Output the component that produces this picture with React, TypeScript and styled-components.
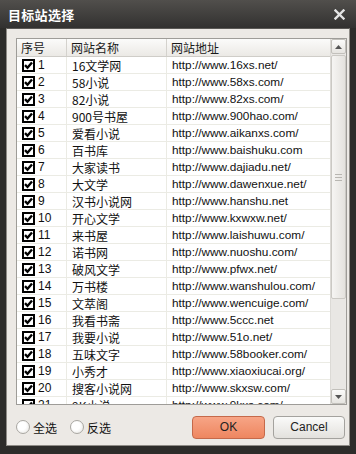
import React from 'react';
import styled, { createGlobalStyle } from 'styled-components';

const GlobalStyle = createGlobalStyle`
  html, body {
    margin: 0;
    padding: 0;
    background: #2d2c2a;
  }
  * {
    box-sizing: border-box;
  }
`;

const sites: [string, string][] = [
  ['16文学网', 'http://www.16xs.net/'],
  ['58小说', 'http://www.58xs.com/'],
  ['82小说', 'http://www.82xs.com/'],
  ['900号书屋', 'http://www.900hao.com/'],
  ['爱看小说', 'http://www.aikanxs.com/'],
  ['百书库', 'http://www.baishuku.com'],
  ['大家读书', 'http://www.dajiadu.net/'],
  ['大文学', 'http://www.dawenxue.net/'],
  ['汉书小说网', 'http://www.hanshu.net'],
  ['开心文学', 'http://www.kxwxw.net/'],
  ['来书屋', 'http://www.laishuwu.com/'],
  ['诺书网', 'http://www.nuoshu.com/'],
  ['破风文学', 'http://www.pfwx.net/'],
  ['万书楼', 'http://www.wanshulou.com/'],
  ['文萃阁', 'http://www.wencuige.com/'],
  ['我看书斋', 'http://www.5ccc.net'],
  ['我要小说', 'http://www.51o.net/'],
  ['五味文字', 'http://www.58booker.com/'],
  ['小秀才', 'http://www.xiaoxiucai.org/'],
  ['搜客小说网', 'http://www.skxsw.com/'],
  ['9K小说', 'http://www.9kxs.com/'],
];

export default function App() {
  return (
    <>
      <GlobalStyle />
      <Window>
        <TitleBar>
          <Title>目标站选择</Title>
          <CloseButton>
            <svg width="11" height="11" viewBox="0 0 11 11">
              <path d="M1.5 1.5 L9.5 9.5 M9.5 1.5 L1.5 9.5" stroke="#e4e4e4" strokeWidth="2.4" strokeLinecap="square" />
            </svg>
          </CloseButton>
        </TitleBar>
        <Body>
          <ListBox>
            <Table>
              <HeaderRow>
                <HeadCell $w={50}>序号</HeadCell>
                <HeadCell $w={100}>网站名称</HeadCell>
                <HeadCell $w={164} $last>网站地址</HeadCell>
              </HeaderRow>
              <Rows>
                {sites.map(([name, url], i) => (
                  <Row key={i}>
                    <Cell $w={50}>
                      <Check>
                        <svg width="9" height="9" viewBox="0 0 9 9">
                          <path d="M1 4.2 L3.5 6.8 L8 1.5" stroke="#000" strokeWidth="2.4" fill="none" />
                        </svg>
                      </Check>
                      <Num>{i + 1}</Num>
                    </Cell>
                    <Cell $w={100}>
                      <Name>{name}</Name>
                    </Cell>
                    <Cell $w={164} $last>
                      <Url>{url}</Url>
                    </Cell>
                  </Row>
                ))}
              </Rows>
            </Table>
            <ScrollBar>
              <ScrollButton>
                <svg width="7" height="4" viewBox="0 0 7 4">
                  <path d="M0 4 L3.5 0 L7 4 Z" fill="#555" />
                </svg>
              </ScrollButton>
              <Track>
                <Thumb>
                  <Grip />
                  <Grip />
                  <Grip />
                </Thumb>
              </Track>
              <ScrollButton>
                <svg width="7" height="4" viewBox="0 0 7 4">
                  <path d="M0 0 L3.5 4 L7 0 Z" fill="#555" />
                </svg>
              </ScrollButton>
            </ScrollBar>
          </ListBox>
          <Footer>
            <RadioLabel>
              <Radio />
              全选
            </RadioLabel>
            <RadioLabel>
              <Radio />
              反选
            </RadioLabel>
            <Spacer />
            <Button $primary>OK</Button>
            <Button>Cancel</Button>
          </Footer>
        </Body>
      </Window>
    </>
  );
}

const Window = styled.div`
  width: 356px;
  height: 454px;
  display: flex;
  flex-direction: column;
  background: #2d2c2a;
  padding: 0 6px 8px 6px;
`;

const TitleBar = styled.div`
  height: 28px;
  display: flex;
  align-items: center;
  justify-content: space-between;
  margin: 0 -6px;
  padding: 0 6px 0 8px;
  background: linear-gradient(#514f4c, #323130);
`;

const Title = styled.div`
  color: #fff;
  font-family: 'Noto Sans CJK SC', sans-serif;
  font-weight: bold;
  font-size: 13px;
  letter-spacing: 0.3px;
`;

const CloseButton = styled.div`
  width: 14px;
  height: 14px;
  display: flex;
  align-items: center;
  justify-content: center;
  margin-right: 4px;
`;

const Body = styled.div`
  flex: 1;
  display: flex;
  flex-direction: column;
  background: #ece9e5;
  border: 1px solid #8e8b86;
  border-top-color: #5a5855;
  padding: 9px 2px 7px 9px;
`;

const ListBox = styled.div`
  height: 367px;
  display: flex;
  background: #fff;
  border: 1px solid #9e9c98;
  overflow: hidden;
`;

const Table = styled.div`
  width: 314px;
  display: flex;
  flex-direction: column;
  overflow: hidden;
`;

const HeaderRow = styled.div`
  height: 18px;
  flex-shrink: 0;
  display: flex;
  background: linear-gradient(#fbfbfa, #ebe9e5);
  border-bottom: 1px solid #cfcdc8;
`;

const HeadCell = styled.div<{ $w: number; $last?: boolean }>`
  width: ${(p) => p.$w}px;
  flex-shrink: 0;
  padding-left: 4px;
  display: flex;
  align-items: center;
  font-family: 'Noto Sans CJK SC', sans-serif;
  font-size: 12px;
  color: #1a1a1a;
  border-right: ${(p) => (p.$last ? 'none' : '1px solid #d4d2cd')};
`;

const Rows = styled.div`
  flex: 1;
  overflow: hidden;
`;

const Row = styled.div`
  height: 17px;
  display: flex;
  border-bottom: 1px solid #ebebe4;
`;

const Cell = styled.div<{ $w: number; $last?: boolean }>`
  width: ${(p) => p.$w}px;
  flex-shrink: 0;
  display: flex;
  align-items: center;
  padding-left: 5px;
  border-right: ${(p) => (p.$last ? 'none' : '1px solid #ebebe4')};
  overflow: hidden;
  white-space: nowrap;
`;

const Check = styled.div`
  width: 13px;
  height: 13px;
  border: 2px solid #000;
  background: #fff;
  display: flex;
  align-items: center;
  justify-content: center;
  flex-shrink: 0;
`;

const Num = styled.span`
  margin-left: 3px;
  font-family: 'Liberation Sans', sans-serif;
  font-size: 12px;
  color: #111;
`;

const Name = styled.span`
  font-family: 'Noto Sans CJK SC', sans-serif;
  font-size: 12px;
  color: #111;
`;

const Url = styled.span`
  font-family: 'Liberation Sans', sans-serif;
  font-size: 11.8px;
  color: #111;
`;

const ScrollBar = styled.div`
  width: 16px;
  flex-shrink: 0;
  display: flex;
  flex-direction: column;
  background: #e9e7e4;
  border-left: 1px solid #dcdad6;
`;

const ScrollButton = styled.div`
  height: 15px;
  flex-shrink: 0;
  display: flex;
  align-items: center;
  justify-content: center;
  background: linear-gradient(#fbfbfa, #e6e4e0);
  border: 1px solid #c2c0bb;
  border-radius: 2px;
`;

const Track = styled.div`
  flex: 1;
  padding: 1px 0 90px 0;
  display: flex;
`;

const Thumb = styled.div`
  flex: 1;
  display: flex;
  flex-direction: column;
  align-items: center;
  justify-content: center;
  gap: 2px;
  background: linear-gradient(90deg, #f6f5f3, #e4e2de);
  border: 1px solid #cbc9c4;
  border-radius: 2px;
`;

const Grip = styled.div`
  width: 7px;
  height: 1px;
  background: #b8b6b1;
`;

const Footer = styled.div`
  margin-top: 11px;
  height: 22px;
  display: flex;
  align-items: center;
`;

const RadioLabel = styled.label`
  display: flex;
  align-items: center;
  gap: 3px;
  margin-right: 13px;
  font-family: 'Noto Sans CJK SC', sans-serif;
  font-size: 12px;
  color: #111;
`;

const Radio = styled.span`
  width: 14px;
  height: 14px;
  border-radius: 50%;
  border: 1px solid #a9a7a2;
  background: radial-gradient(circle at 40% 40%, #ffffff 40%, #e2e0dc);
`;

const Spacer = styled.div`
  flex: 1;
`;

const Button = styled.button<{ $primary?: boolean }>`
  width: ${(p) => (p.$primary ? 73 : 72)}px;
  height: 23px;
  margin-left: ${(p) => (p.$primary ? 0 : 8)}px;
  margin-right: ${(p) => (p.$primary ? 0 : 2)}px;
  border-radius: 4px;
  font-family: 'Liberation Sans', sans-serif;
  font-size: 12px;
  color: #222;
  border: 1px solid ${(p) => (p.$primary ? '#c5694a' : '#a4a29e')};
  background: ${(p) =>
    p.$primary ? 'linear-gradient(#f7a586, #ee8660)' : 'linear-gradient(#fafaf9, #e3e1dd)'};
`;
